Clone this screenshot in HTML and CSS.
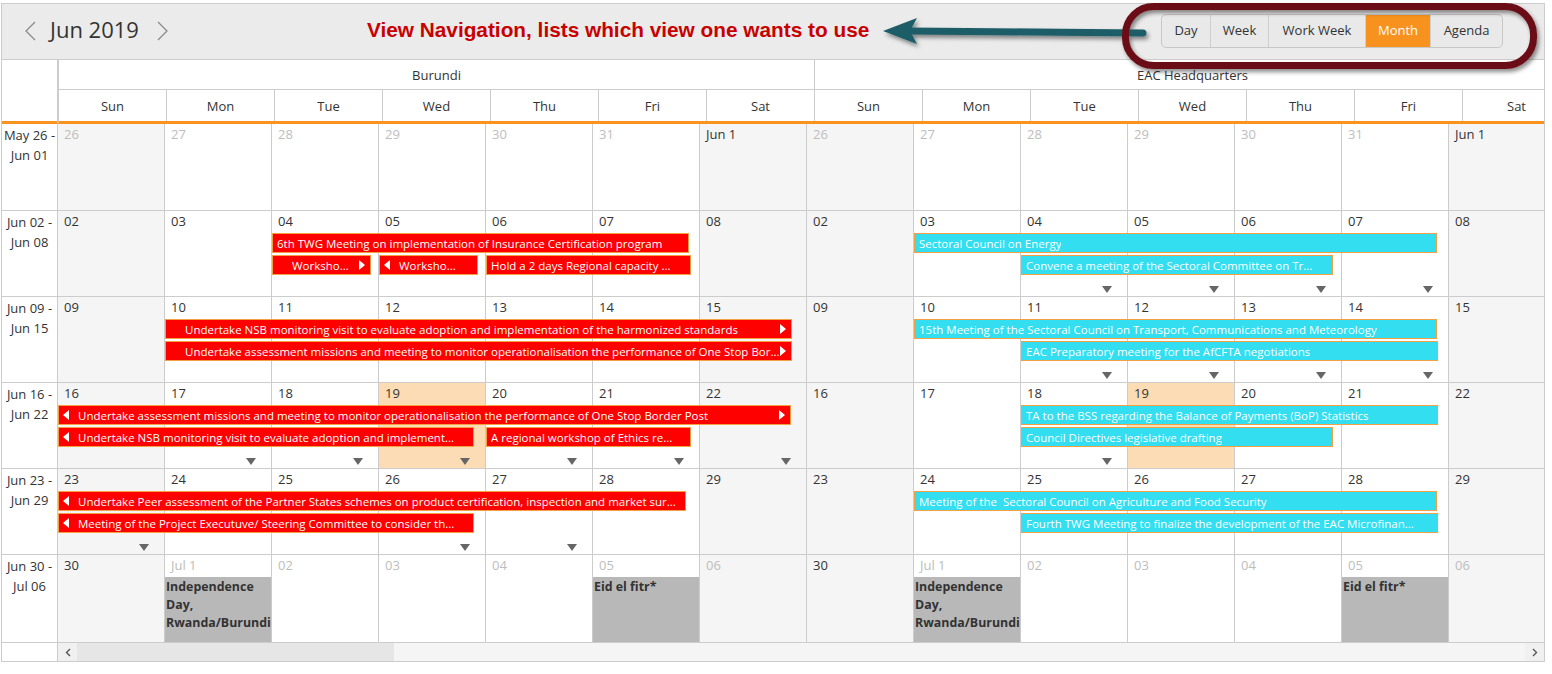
FILE: index.html
```html
<!DOCTYPE html>
<html>
<head>
<meta charset="utf-8">
<title>Scheduler</title>
<link rel="stylesheet" href="styles.css">
</head>
<body>
<div class="sched">
  <div class="toolbar">
    <svg class="chev" width="12" height="20" viewBox="0 0 12 20"><polyline points="11,1 2,10 11,19" fill="none" stroke="#8a8a8a" stroke-width="1.3"/></svg>
    <span class="title">Jun 2019</span>
    <svg class="chev" width="12" height="20" viewBox="0 0 12 20"><polyline points="1,1 10,10 1,19" fill="none" stroke="#8a8a8a" stroke-width="1.3"/></svg>
    <span class="note">View Navigation, lists which view one wants to use</span>
    <div class="views">
      <span class="vb v-day">Day</span><span class="vb v-week">Week</span><span class="vb v-ww">Work Week</span><span class="vb v-month on">Month</span><span class="vb v-agenda">Agenda</span>
    </div>
  </div>
  <div class="body">
    <div class="timecol">
      <div class="tc-head"></div>
      <div class="tc first">May 26 -<br>Jun 01</div>
      <div class="tc">Jun 02 -<br>Jun 08</div>
      <div class="tc">Jun 09 -<br>Jun 15</div>
      <div class="tc">Jun 16 -<br>Jun 22</div>
      <div class="tc">Jun 23 -<br>Jun 29</div>
      <div class="tc last">Jun 30 -<br>Jul 06</div>
      <div class="tc-foot"></div>
    </div>
    <div class="main">
      <div class="hdr">
        <div class="res-row"><div class="res">Burundi</div><div class="res">EAC Headquarters</div></div>
        <div class="day-row">
          <div class="dh">Sun</div><div class="dh">Mon</div><div class="dh">Tue</div><div class="dh">Wed</div><div class="dh">Thu</div><div class="dh">Fri</div><div class="dh">Sat</div>
          <div class="dh">Sun</div><div class="dh">Mon</div><div class="dh">Tue</div><div class="dh">Wed</div><div class="dh">Thu</div><div class="dh">Fri</div><div class="dh">Sat</div>
        </div>
      </div>

      <div class="wk first">
        <div class="c we"><span class="d om">26</span></div>
        <div class="c"><span class="d om">27</span></div>
        <div class="c"><span class="d om">28</span></div>
        <div class="c"><span class="d om">29</span></div>
        <div class="c"><span class="d om">30</span></div>
        <div class="c"><span class="d om">31</span></div>
        <div class="c we"><span class="d">Jun 1</span></div>
        <div class="c we"><span class="d om">26</span></div>
        <div class="c"><span class="d om">27</span></div>
        <div class="c"><span class="d om">28</span></div>
        <div class="c"><span class="d om">29</span></div>
        <div class="c"><span class="d om">30</span></div>
        <div class="c"><span class="d om">31</span></div>
        <div class="c we"><span class="d">Jun 1</span></div>
      </div>

      <div class="wk">
        <div class="c we"><span class="d">02</span></div>
        <div class="c"><span class="d">03</span></div>
        <div class="c"><span class="d">04</span></div>
        <div class="c"><span class="d">05</span></div>
        <div class="c"><span class="d">06</span></div>
        <div class="c"><span class="d">07</span></div>
        <div class="c we"><span class="d">08</span></div>
        <div class="c we"><span class="d">02</span></div>
        <div class="c"><span class="d">03</span></div>
        <div class="c"><span class="d">04</span><i class="more"></i></div>
        <div class="c"><span class="d">05</span><i class="more"></i></div>
        <div class="c"><span class="d">06</span><i class="more"></i></div>
        <div class="c"><span class="d">07</span><i class="more"></i></div>
        <div class="c we"><span class="d">08</span></div>
        <div class="ev red l1" style="left:214px;width:417px"><span>6th TWG Meeting on implementation of Insurance Certification program</span></div>
        <div class="ev red l2 pl" style="left:214px;width:99px"><span>Worksho...</span><i class="ar"></i></div>
        <div class="ev red l2" style="left:321px;width:99px"><i class="al"></i><span>Worksho...</span></div>
        <div class="ev red l2" style="left:428px;width:205px"><span>Hold a 2 days Regional capacity ...</span></div>
        <div class="ev cy l1" style="left:856px;width:523px"><span>Sectoral Council on Energy</span></div>
        <div class="ev cy l2" style="left:963px;width:312px"><span>Convene a meeting of the Sectoral Committee on Tr...</span></div>
      </div>

      <div class="wk">
        <div class="c we"><span class="d">09</span></div>
        <div class="c"><span class="d">10</span></div>
        <div class="c"><span class="d">11</span></div>
        <div class="c"><span class="d">12</span></div>
        <div class="c"><span class="d">13</span></div>
        <div class="c"><span class="d">14</span></div>
        <div class="c we"><span class="d">15</span></div>
        <div class="c we"><span class="d">09</span></div>
        <div class="c"><span class="d">10</span></div>
        <div class="c"><span class="d">11</span><i class="more"></i></div>
        <div class="c"><span class="d">12</span><i class="more"></i></div>
        <div class="c"><span class="d">13</span><i class="more"></i></div>
        <div class="c"><span class="d">14</span><i class="more"></i></div>
        <div class="c we"><span class="d">15</span></div>
        <div class="ev red l1 pl" style="left:107px;width:627px"><span>Undertake NSB monitoring visit to evaluate adoption and implementation of the harmonized standards</span><i class="ar"></i></div>
        <div class="ev red l2 pl" style="left:107px;width:627px"><span>Undertake assessment missions and meeting to monitor operationalisation the performance of One Stop Bor...</span><i class="ar"></i></div>
        <div class="ev cy l1" style="left:856px;width:523px"><span>15th Meeting of the Sectoral Council on Transport, Communications and Meteorology</span></div>
        <div class="ev cy l2" style="left:963px;width:417px"><span>EAC Preparatory meeting for the AfCFTA negotiations</span></div>
      </div>

      <div class="wk">
        <div class="c we"><span class="d">16</span></div>
        <div class="c"><span class="d">17</span><i class="more"></i></div>
        <div class="c"><span class="d">18</span><i class="more"></i></div>
        <div class="c td"><span class="d">19</span><i class="more"></i></div>
        <div class="c"><span class="d">20</span><i class="more"></i></div>
        <div class="c"><span class="d">21</span><i class="more"></i></div>
        <div class="c we"><span class="d">22</span><i class="more"></i></div>
        <div class="c we"><span class="d">16</span></div>
        <div class="c"><span class="d">17</span></div>
        <div class="c"><span class="d">18</span><i class="more"></i></div>
        <div class="c td"><span class="d">19</span></div>
        <div class="c"><span class="d">20</span></div>
        <div class="c"><span class="d">21</span></div>
        <div class="c we"><span class="d">22</span></div>
        <div class="ev red l1" style="left:0;width:733px"><i class="al"></i><span>Undertake assessment missions and meeting to monitor operationalisation the performance of One Stop Border Post</span><i class="ar"></i></div>
        <div class="ev red l2" style="left:0;width:416px"><i class="al"></i><span>Undertake NSB monitoring visit to evaluate adoption and implement...</span></div>
        <div class="ev red l2" style="left:428px;width:205px"><span>A regional workshop of Ethics re...</span></div>
        <div class="ev cy l1" style="left:963px;width:417px"><span>TA to the BSS regarding the Balance of Payments (BoP) Statistics</span></div>
        <div class="ev cy l2" style="left:963px;width:312px"><span>Council Directives legislative drafting</span></div>
      </div>

      <div class="wk">
        <div class="c we"><span class="d">23</span><i class="more"></i></div>
        <div class="c"><span class="d">24</span></div>
        <div class="c"><span class="d">25</span></div>
        <div class="c"><span class="d">26</span><i class="more"></i></div>
        <div class="c"><span class="d">27</span><i class="more"></i></div>
        <div class="c"><span class="d">28</span></div>
        <div class="c we"><span class="d">29</span></div>
        <div class="c we"><span class="d">23</span></div>
        <div class="c"><span class="d">24</span></div>
        <div class="c"><span class="d">25</span></div>
        <div class="c"><span class="d">26</span></div>
        <div class="c"><span class="d">27</span></div>
        <div class="c"><span class="d">28</span></div>
        <div class="c we"><span class="d">29</span></div>
        <div class="ev red l1" style="left:0;width:628px"><i class="al"></i><span>Undertake Peer assessment of the Partner States schemes on product certification, inspection and market sur...</span></div>
        <div class="ev red l2" style="left:0;width:416px"><i class="al"></i><span>Meeting of the Project Executuve/ Steering Committee to consider th...</span></div>
        <div class="ev cy l1" style="left:856px;width:523px"><span>Meeting of the&nbsp; Sectoral Council on Agriculture and Food Security</span></div>
        <div class="ev cy l2" style="left:963px;width:417px"><span>Fourth TWG Meeting to finalize the development of the EAC Microfinan...</span></div>
      </div>

      <div class="wk last">
        <div class="c we"><span class="d">30</span></div>
        <div class="c"><span class="d om">Jul 1</span><div class="hol">Independence Day, Rwanda/Burundi</div></div>
        <div class="c"><span class="d om">02</span></div>
        <div class="c"><span class="d om">03</span></div>
        <div class="c"><span class="d om">04</span></div>
        <div class="c"><span class="d om">05</span><div class="hol">Eid el fitr*</div></div>
        <div class="c we"><span class="d om">06</span></div>
        <div class="c we"><span class="d">30</span></div>
        <div class="c"><span class="d om">Jul 1</span><div class="hol">Independence Day, Rwanda/Burundi</div></div>
        <div class="c"><span class="d om">02</span></div>
        <div class="c"><span class="d om">03</span></div>
        <div class="c"><span class="d om">04</span></div>
        <div class="c"><span class="d om">05</span><div class="hol">Eid el fitr*</div></div>
        <div class="c we"><span class="d om">06</span></div>
      </div>

      <div class="sbar">
        <div class="sb-btn"><svg width="6" height="9" viewBox="0 0 6 9"><polyline points="5,1 1.5,4.5 5,8" fill="none" stroke="#555" stroke-width="1.4"/></svg></div>
        <div class="sb-thumb"></div>
        <div class="sb-track"></div>
        <div class="sb-btn"><svg width="6" height="9" viewBox="0 0 6 9"><polyline points="1,1 4.5,4.5 1,8" fill="none" stroke="#555" stroke-width="1.4"/></svg></div>
      </div>
    </div>
  </div>
</div>

<svg class="annot" width="1552" height="90" viewBox="0 0 1552 90">
  <defs>
    <filter id="sh" x="-5%" y="-30%" width="115%" height="180%">
      <feDropShadow dx="2" dy="3" stdDeviation="2" flood-color="#000" flood-opacity="0.45"/>
    </filter>
  </defs>
  <g filter="url(#sh)">
    <path d="M1143 33 L908 31" stroke="#1c5d67" stroke-width="7" stroke-linecap="round" fill="none"/>
    <path d="M883 31 L917 18 L910 31 L917 44 Z" fill="#1c5d67"/>
    <rect x="1125.5" y="6.5" width="408" height="59" rx="28" ry="28" fill="none" stroke="#6b0e16" stroke-width="7"/>
  </g>
</svg>
</body>
</html>
```

FILE: styles.css
```css
* { box-sizing: border-box; }
body { margin: 0; font-family: "Open Sans", "Noto Sans", sans-serif; color: #333; background: #fff; }

.sched { margin: 3px 0 0 1px; width: 1544px; border: 1px solid #cccccc; background: #fff; }

.toolbar { height: 56px; background: #ebebeb; border-bottom: 1px solid #cccccc; display: flex; align-items: center; padding: 0 41px 0 22px; }
.chev { flex: none; display: block; margin-bottom: 2px; }
.title { font-size: 22px; line-height: 1; margin: 0 18px 5px 14px; color: #333; }
.note { margin: 0 0 4px 198px; font-family: "Liberation Sans", Arial, sans-serif; font-weight: bold; font-size: 20.8px; color: #c80000; white-space: nowrap; }
.views { margin-left: auto; margin-bottom: 2px; display: flex; height: 34px; border: 1px solid #c8c8c8; border-radius: 5px; overflow: hidden; background: #e9e9e9; }
.vb { display: flex; align-items: center; justify-content: center; padding-bottom: 2px; font-size: 13px; color: #333; border-left: 1px solid #cfcfcf; }
.vb:first-child { border-left: none; }
.vb.on { background: #f7921e; color: #fff; }
.v-day { width: 48px; }
.v-week { width: 58px; }
.v-ww { width: 97px; }
.v-month { width: 65px; }
.v-agenda { width: 72px; }

.body { display: flex; }

.timecol { flex: none; width: 56px; border-right: 1px solid #cccccc; display: flex; flex-direction: column; }
.tc-head { height: 64px; border-bottom: 3px solid #f7931e; }
.tc { height: 86px; border-bottom: 1px solid #cccccc; text-align: center; font-size: 13px; line-height: 20px; padding-top: 1px; }
.tc.first { height: 87px; }
.tc.last { height: 88px; }
.tc-foot { flex: 1; }

.main { flex: none; width: 1486px; overflow: hidden; }

.hdr { border-left: 1px solid #cccccc; border-bottom: 3px solid #f7931e; }
.res-row { display: flex; height: 30px; border-bottom: 1px solid #cccccc; }
.res { flex: none; width: 756px; border-right: 1px solid #cccccc; display: flex; align-items: center; justify-content: center; font-size: 13px; }
.day-row { display: flex; height: 31px; }
.dh { flex: none; width: 108px; border-right: 1px solid #cccccc; display: flex; align-items: center; justify-content: center; font-size: 13px; }

.wk { position: relative; display: flex; height: 86px; border-bottom: 1px solid #cccccc; }
.wk.first { height: 87px; }
.wk.last { height: 88px; }
.c { flex: none; width: 107px; border-right: 1px solid #cccccc; display: flex; flex-direction: column; background: #fff; }
.c.we { background: #f5f5f5; }
.c.td { background: #fcdcb4; }
.d { display: block; height: 22px; padding: 0 6px; font-size: 13px; line-height: 20px; color: #333; }
.d.om { color: #bdbdbd; }
.more { align-self: flex-end; margin: auto 15px 3px 0; width: 0; height: 0; border-left: 5px solid transparent; border-right: 5px solid transparent; border-top: 7px solid #666; }
.hol { flex: 1; background: #b8b8b8; font-weight: bold; font-size: 12.4px; line-height: 18px; padding: 1px 0 0 1px; color: #333; }

.ev { position: absolute; height: 20px; border: 1px solid #f3a043; color: #fff; font-size: 11.5px; display: flex; align-items: center; padding: 0 5px 0 4px; white-space: nowrap; overflow: hidden; }
.ev span { overflow: hidden; }
.ev.red { background: #ff0000; }
.ev.cy { background: #32def0; }
.ev.pl { padding-left: 19px; }
.l1 { top: 22px; }
.l2 { top: 44px; }
.al { flex: none; width: 0; height: 0; border-top: 5px solid transparent; border-bottom: 5px solid transparent; border-right: 6px solid #fff; margin-right: 9px; }
.ar { flex: none; width: 0; height: 0; border-top: 5px solid transparent; border-bottom: 5px solid transparent; border-left: 6px solid #fff; margin-left: auto; margin-right: 0; }

.sbar { display: flex; height: 18px; background: #f5f5f5; }
.sb-btn { flex: none; width: 19px; display: flex; align-items: center; justify-content: center; background: #f0f0f0; }
.sb-thumb { flex: none; width: 317px; background: #e6e6e6; }
.sb-track { flex: 1; }

.annot { position: absolute; left: 0; top: 0; pointer-events: none; }
```
